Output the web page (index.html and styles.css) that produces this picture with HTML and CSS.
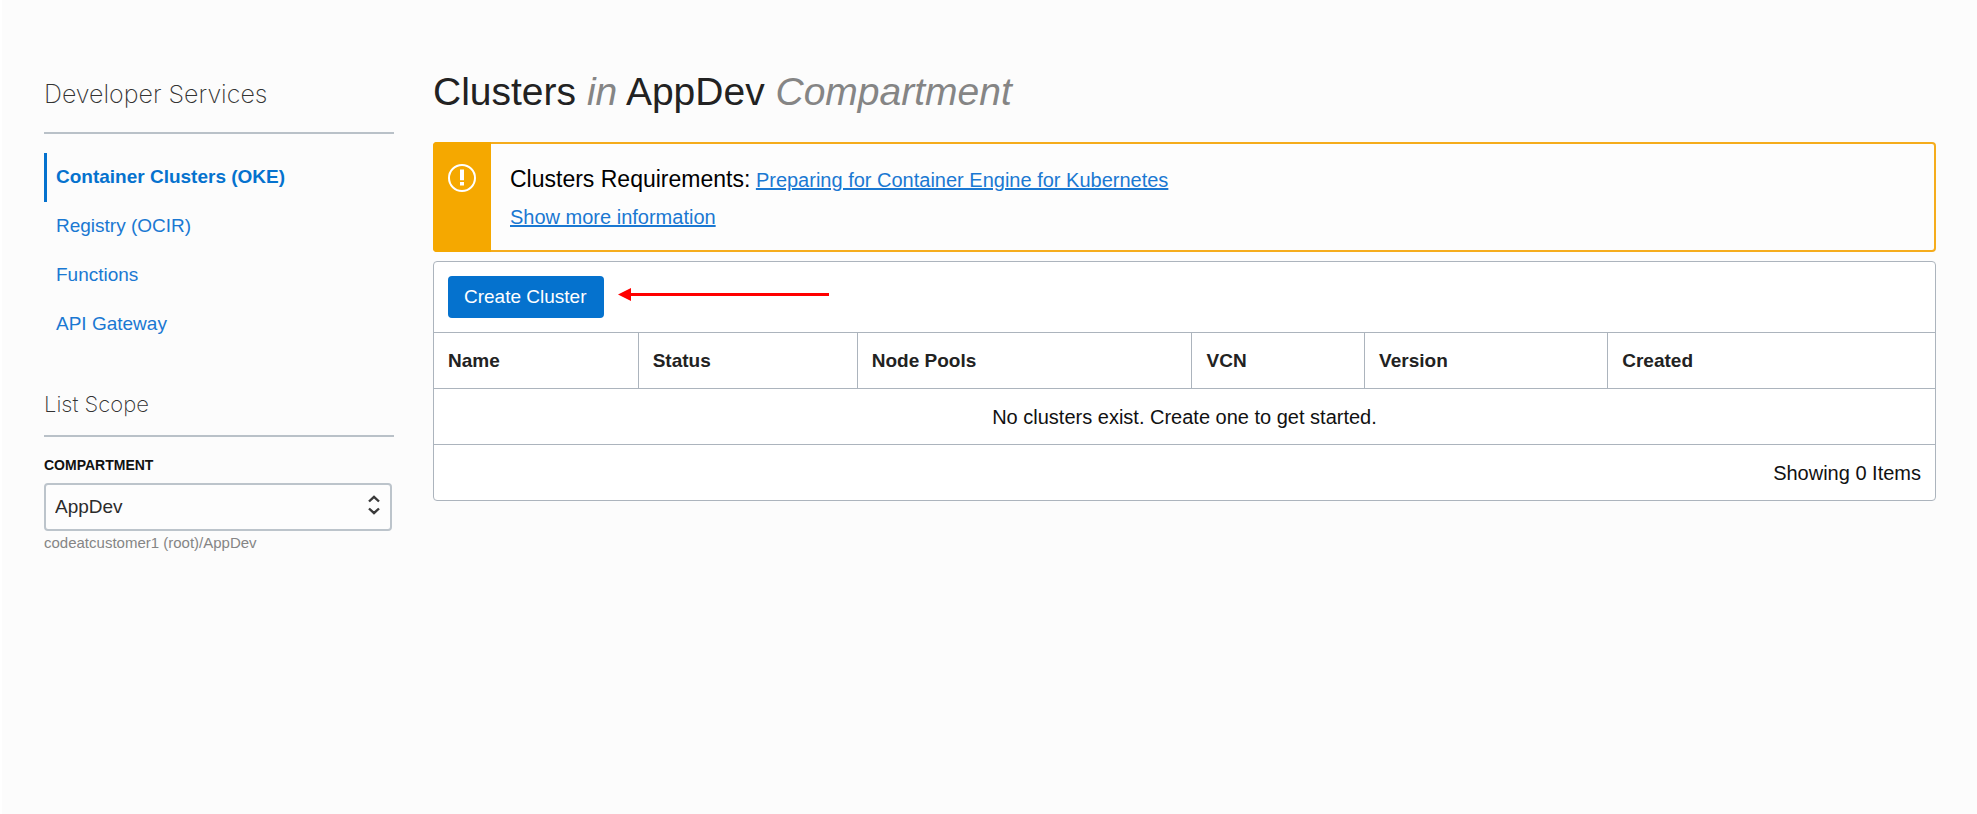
FILE: index.html
```html
<!DOCTYPE html>
<html lang="en">
<head>
  <meta charset="utf-8">
  <meta name="viewport" content="width=device-width, initial-scale=1">
  <title>Clusters in AppDev Compartment</title>
  <link rel="stylesheet" href="styles.css">
</head>
<body>
  <div class="layout">
    <aside class="sidebar">
      <h2 class="sidebar-title">Developer Services</h2>
      <nav class="nav">
        <a class="nav-link nav-link-active" href="#clusters" aria-current="page">Container Clusters (OKE)</a>
        <a class="nav-link" href="#registry">Registry (OCIR)</a>
        <a class="nav-link" href="#functions">Functions</a>
        <a class="nav-link" href="#gateway">API Gateway</a>
      </nav>
      <h3 class="scope-title">List Scope</h3>
      <label class="field-label" for="compartment">COMPARTMENT</label>
      <div class="select-wrap">
        <select class="select" id="compartment">
          <option>AppDev</option>
        </select>
        <svg class="select-icon" width="12" height="20" viewBox="0 0 12 20" fill="none" stroke="#3a3a3a" stroke-width="2.4" aria-hidden="true">
          <path d="M1 6.5 6 1.8l5 4.7M1 13.5l5 4.7 5-4.7"/>
        </svg>
      </div>
      <p class="field-hint">codeatcustomer1 (root)/AppDev</p>
    </aside>

    <main class="main">
      <h1 class="page-title">Clusters <em>in</em> AppDev <em>Compartment</em></h1>

      <section class="alert">
        <div class="alert-mark">
          <svg width="28" height="28" viewBox="0 0 28 28" fill="none" aria-hidden="true">
            <circle cx="14" cy="14" r="13" stroke="#fff" stroke-width="2"/>
            <path d="M14 5.5v10.8M14 18v3.6" stroke="#fff" stroke-width="4"/>
          </svg>
        </div>
        <div class="alert-body">
          <p class="alert-line"><span class="alert-heading">Clusters Requirements:</span> <a class="link" href="#preparing">Preparing for Container Engine for Kubernetes</a></p>
          <p class="alert-line"><a class="link" href="#more">Show more information</a></p>
        </div>
      </section>

      <section class="panel">
        <div class="toolbar">
          <button class="button" type="button">Create Cluster</button>
          <svg class="arrow" width="212" height="18" viewBox="0 0 212 18" aria-hidden="true">
            <path d="M0 6.5 13 0v13z" fill="#f00"/>
            <path d="M12 6.5h199" stroke="#f00" stroke-width="3"/>
          </svg>
        </div>
        <table class="table">
          <colgroup>
            <col class="col-name"><col class="col-status"><col class="col-pools"><col class="col-vcn"><col class="col-version"><col>
          </colgroup>
          <thead>
            <tr><th>Name</th><th>Status</th><th>Node Pools</th><th>VCN</th><th>Version</th><th>Created</th></tr>
          </thead>
          <tbody>
            <tr><td class="empty" colspan="6">No clusters exist. Create one to get started.</td></tr>
          </tbody>
          <tfoot>
            <tr><td class="count" colspan="6">Showing 0 Items</td></tr>
          </tfoot>
        </table>
      </section>
    </main>
  </div>
</body>
</html>
```
FILE: styles.css
```css
* {
  box-sizing: border-box;
}

body {
  margin: 0;
  min-height: 100vh;
  border-left: 2px solid #fff;
  background: #fcfcfc;
  color: #111;
  font-family: "Liberation Sans", Arial, sans-serif;
  font-size: 19px;
  line-height: 24px;
}

h1,
h2,
h3,
p {
  margin: 0;
}

.layout {
  display: flex;
  gap: 39px;
  padding: 68px 41px 40px 42px;
}

.sidebar {
  flex: 0 0 350px;
}

.sidebar-title,
.scope-title {
  border-bottom: 2px solid #b9c1c8;
  color: #333;
  font-family: Inter, "Liberation Sans", sans-serif;
  font-weight: 200;
}

.sidebar-title {
  padding: 10px 0 22px;
  font-size: 25px;
  line-height: 32px;
}

.scope-title {
  margin-top: 41px;
  padding-bottom: 17px;
  font-size: 22px;
  line-height: 28px;
}

.nav {
  display: flex;
  flex-direction: column;
  margin-top: 19px;
}

.nav-link {
  padding: 12px 0 13px 9px;
  border-left: 3px solid transparent;
  color: #1a78d2;
  text-decoration: none;
}

.nav-link-active {
  border-color: #0572ce;
  color: #0572ce;
  font-weight: 700;
}

.field-label {
  display: block;
  margin-top: 18px;
  font-size: 14px;
  font-weight: 700;
  line-height: 20px;
}

.select-wrap {
  position: relative;
  width: 348px;
  margin-top: 8px;
}

.select {
  display: block;
  width: 100%;
  height: 48px;
  padding: 0 40px 0 9px;
  appearance: none;
  border: 2px solid #bcc4cb;
  border-radius: 4px;
  background: #fdfdfd;
  color: #2b2b2b;
  font: inherit;
}

.select-icon {
  position: absolute;
  top: 12px;
  right: 12px;
  pointer-events: none;
}

.field-hint {
  margin-top: 2px;
  color: #858585;
  font-size: 15px;
  line-height: 20px;
}

.main {
  flex: 1;
  min-width: 0;
}

.page-title {
  color: #222;
  font-size: 39px;
  font-weight: 400;
  line-height: 48px;
}

.page-title em {
  color: #858585;
}

.alert {
  display: flex;
  margin-top: 26px;
  border: 2px solid #f5ac1c;
  border-radius: 4px;
  background: #fdfdfd;
}

.alert-mark {
  flex: 0 0 58px;
  margin: -2px 0 -2px -2px;
  padding-top: 22px;
  border-radius: 4px 0 0 4px;
  background: #f5a800;
  text-align: center;
}

.alert-body {
  padding: 17px 19px 14px;
}

.alert-line {
  font-size: 20px;
  line-height: 37px;
}

.alert-heading {
  color: #000;
  font-size: 23px;
}

.link {
  color: #1a78d2;
  text-decoration: underline;
}

.panel {
  margin-top: 9px;
  border: 1px solid #acb4bd;
  border-radius: 4px;
  background: #fff;
}

.toolbar {
  display: flex;
  align-items: center;
  gap: 14px;
  padding: 14px;
}

.button {
  padding: 9px 17px 9px 16px;
  border: 0;
  border-radius: 4px;
  background: #0572ce;
  color: #fff;
  font: inherit;
}

.table {
  width: 100%;
  border-collapse: collapse;
  table-layout: fixed;
}

.col-name {
  width: 13.6%;
}

.col-status {
  width: 14.6%;
}

.col-pools {
  width: 22.3%;
}

.col-vcn {
  width: 11.5%;
}

.col-version {
  width: 16.2%;
}

.table th,
.table td {
  padding: 16px 14px 15px;
  border-top: 1px solid #acb4bd;
  text-align: left;
}

.table th {
  color: #222;
}

.table td {
  font-size: 20px;
}

.table th + th {
  border-left: 1px solid #acb4bd;
}

.table .empty {
  text-align: center;
}

.table .count {
  text-align: right;
}
```
